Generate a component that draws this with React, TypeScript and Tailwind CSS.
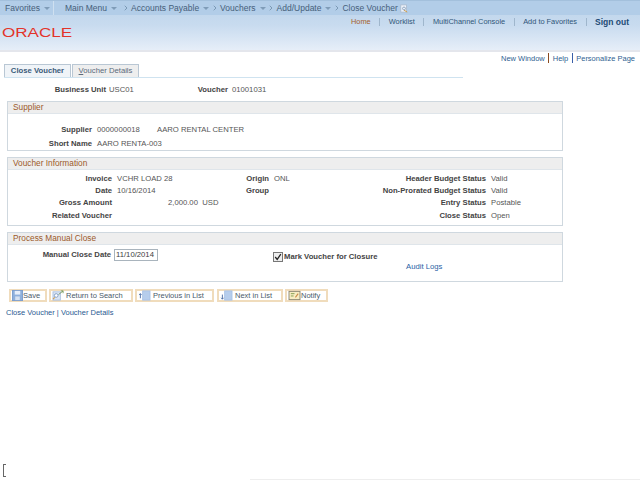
import React from 'react';
import { ChevronRight } from 'lucide-react';

const label = 'font-bold text-[#444444]';
const value = 'text-[#555555]';

function Crumb({ children, arrow = true }: { children: React.ReactNode; arrow?: boolean }) {
  return (
    <span className="flex items-center whitespace-nowrap">
      <span>{children}</span>
      {arrow && <span className="ml-[4px] mt-[1px] h-0 w-0 border-x-[3px] border-t-[3px] border-x-transparent border-t-[#7f9cb8]" />}
    </span>
  );
}

function Sep() {
  return <ChevronRight className="mx-[1.5px] h-[8px] w-[8px] text-[#5f7f9c]" strokeWidth={2} />;
}

function SectionHead({ title }: { title: string }) {
  return (
    <div className="h-[12px] border-b border-[#dfe5ea] bg-[#eeeeee] pl-[5px] text-[8.3px] leading-[10.5px] text-[#9c5a2a]">
      {title}
    </div>
  );
}

function Section({ title, height, children }: { title: string; height: string; children?: React.ReactNode }) {
  return (
    <section className={`w-[556px] border border-[#cfd8df] ${height}`}>
      <SectionHead title={title} />
      {children}
    </section>
  );
}

function Pair({ k, v, kw, vw, gap = 'ml-[5px]' }: { k: string; v?: string; kw: string; vw?: string; gap?: string }) {
  return (
    <>
      <span className={`${kw} shrink-0 whitespace-nowrap text-right ${label}`}>{k}</span>
      <span className={`${gap} ${vw ?? ''} shrink-0 whitespace-pre ${value}`}>{v}</span>
    </>
  );
}

function VoucherRow({ left, mid, right }: { left: React.ReactNode; mid: [string, string?]; right: [string, string] }) {
  return (
    <div className="flex h-[12.4px] items-center leading-[12px]">
      <div className="flex w-[230px] shrink-0">{left}</div>
      <Pair k={mid[0]} v={mid[1]} kw="w-[31px]" vw="w-[82px]" />
      <Pair k={right[0]} v={right[1]} kw="w-[130px]" />
    </div>
  );
}

function IconSave() {
  return (
    <svg viewBox="0 0 12 12" className="h-[11px] w-[11px] shrink-0">
      <rect x="0.5" y="0.5" width="11" height="11" fill="#8fb0dc" stroke="#7a9ccc" />
      <rect x="3" y="1" width="6" height="4" fill="#e6eefa" />
      <rect x="3.5" y="7" width="5" height="4" fill="#d5e1f2" />
    </svg>
  );
}

function IconSearch() {
  return (
    <svg viewBox="0 0 14 12" className="h-[11px] w-[13px] shrink-0">
      <rect x="1" y="2" width="8" height="9" fill="#dbe6f5" stroke="#a9bfdf" />
      <path d="M7 5 L12 1 M12 1 L9.5 1 M12 1 L12 3.5" stroke="#7a9a5c" strokeWidth="1" fill="none" />
      <circle cx="4.5" cy="6" r="2" fill="#fff" stroke="#7f9bc4" />
      <path d="M3 8 L1 10" stroke="#d4a050" strokeWidth="1.2" />
    </svg>
  );
}

function IconPrev() {
  return (
    <svg viewBox="0 0 14 12" className="h-[11px] w-[13px] shrink-0">
      <rect x="5" y="1" width="8" height="10" fill="#b6cdec" stroke="#a9c2e6" />
      <path d="M2.5 9 V4 M1.2 5.5 L2.5 4 L3.8 5.5" stroke="#4a6ba3" strokeWidth="1" fill="none" />
    </svg>
  );
}

function IconNext() {
  return (
    <svg viewBox="0 0 14 12" className="h-[11px] w-[13px] shrink-0">
      <rect x="5" y="1" width="8" height="10" fill="#b6cdec" stroke="#a9c2e6" />
      <path d="M2.5 5 V10 M1.2 8.5 L2.5 10 L3.8 8.5" stroke="#4a6ba3" strokeWidth="1" fill="none" />
    </svg>
  );
}

function IconNotify() {
  return (
    <svg viewBox="0 0 14 12" className="h-[11px] w-[13px] shrink-0">
      <rect x="1" y="1.5" width="12" height="9" fill="#f7edc4" stroke="#8a8570" />
      <path d="M3 4 H7 M3 6.5 H6" stroke="#7f9a4c" strokeWidth="1" />
      <path d="M8 8 L11 4" stroke="#c98a45" strokeWidth="1.2" />
    </svg>
  );
}

function ToolButton({ icon, text, width, gap }: { icon: React.ReactNode; text: string; width: string; gap: string }) {
  return (
    <button className={`flex h-[13px] items-center whitespace-nowrap border-2 border-[#f0dcbc] bg-white pl-px text-[7.5px] text-[#4a5a6a] ${width}`}>
      {icon}
      <span className={gap}>{text}</span>
    </button>
  );
}

export default function App() {
  return (
    <div className="flex h-[480px] w-[640px] flex-col overflow-hidden bg-white font-['Liberation_Sans',Arial,sans-serif] text-[7.7px]">
      {/* Header */}
      <header className="h-[52px] shrink-0 border-b-2 border-[#e4e6ec] bg-gradient-to-b from-[#bcd3ea] via-[#c8dbef] to-[#e6eef8]">
        <nav className="flex h-[15px] items-center border-t border-[#a3c0dc] bg-[#b2cde8] text-[8.5px] text-[#46607a]">
          <div className="flex h-full w-[54px] items-center border-r border-[#cfe0f0] pl-[5px]">
            <Crumb>Favorites</Crumb>
          </div>
          <div className="ml-[11px] flex items-center">
            <Crumb>Main Menu</Crumb>
            <span className="w-[3px]" />
            <Sep />
            <Crumb>Accounts Payable</Crumb>
            <Sep />
            <Crumb>Vouchers</Crumb>
            <Sep />
            <Crumb>Add/Update</Crumb>
            <Sep />
            <span className="whitespace-nowrap">Close Voucher</span>
            <svg viewBox="0 0 10 10" className="ml-[2px] h-[9px] w-[8px]">
              <rect x="1" y="0.5" width="7" height="9" fill="#eef3fa" stroke="#a9b9cc" />
              <path d="M5 7 L9 9.5" stroke="#d39a3c" strokeWidth="1.2" />
              <circle cx="5" cy="5" r="1.8" fill="none" stroke="#7f98b5" />
            </svg>
          </div>
        </nav>
        <div className="flex h-[21px]">
          <div className="w-[351px] shrink-0 pl-[2px]">
            <span className="mt-[12px] block origin-left scale-x-[1.42] text-[12px] leading-[13px] text-[#e3342a]">ORACLE</span>
          </div>
          <div className="flex h-[14px] items-center whitespace-nowrap text-[7.4px] text-[#2f5578]">
            <span className="text-[#a4612d]">Home</span>
            <span className="mx-[8.5px] h-[8px] w-px bg-[#9fb6cc]" />
            <span>Worklist</span>
            <span className="mx-[8.5px] h-[8px] w-px bg-[#9fb6cc]" />
            <span>MultiChannel Console</span>
            <span className="mx-[8.5px] h-[8px] w-px bg-[#9fb6cc]" />
            <span>Add to Favorites</span>
            <span className="mx-[8.5px] h-[8px] w-px bg-[#9fb6cc]" />
            <span className="text-[8.5px] font-bold text-[#1d4a75]">Sign out</span>
          </div>
        </div>
      </header>

      {/* Page links */}
      <div className="flex h-[11px] shrink-0 justify-end pr-[5px] pt-px text-[7.5px] leading-[11px] text-[#2f5f92]">
        <span>New Window</span>
        <span className="mx-[3.5px] w-px bg-[#8a4a20]" />
        <span>Help</span>
        <span className="mx-[3.5px] w-px bg-[#3a5fa8]" />
        <span>Personalize Page</span>
      </div>

      {/* Tabs */}
      <div className="ml-[4px] mt-px flex h-[14px] w-[459px] shrink-0 items-end border-b border-[#cfe3f0]">
        <div className="flex h-[13px] w-[67px] items-center justify-center border border-b-0 border-[#b9c7d4] bg-[#f0f4f8] font-bold text-[#3a5a78]">Close Voucher</div>
        <div className="ml-px flex h-[13px] w-[67px] items-center justify-center border border-b-0 border-[#b9c7d4] bg-[#eeeeee] text-[#5a6a7a]">
          <span><span className="underline">V</span>oucher Details</span>
        </div>
      </div>

      {/* Key fields */}
      <div className="mt-[5.5px] flex h-[12px] shrink-0 items-center leading-[12px]">
        <Pair k="Business Unit" v="USC01" kw="w-[106px]" vw="w-[60px]" gap="ml-[3px]" />
        <Pair k="Voucher" v="01001031" kw="w-[59px]" gap="ml-[4px]" />
      </div>

      <div className="ml-[7px] mt-[5.5px] flex shrink-0 flex-col gap-[6px]">
        <Section title="Supplier" height="h-[50px]">
          <div className="mt-[9px] flex h-[14px] items-center">
            <Pair k="Supplier" v="0000000018" kw="w-[84px]" vw="w-[60px]" />
            <span className={value}>AARO RENTAL CENTER</span>
          </div>
          <div className="flex h-[14px] items-center">
            <Pair k="Short Name" v="AARO RENTA-003" kw="w-[84px]" />
          </div>
        </Section>

        <Section title="Voucher Information" height="h-[69px]">
          <div className="mt-[2.5px] flex flex-col">
            <VoucherRow
              left={<Pair k="Invoice" v="VCHR LOAD 28" kw="w-[104px]" />}
              mid={['Origin', 'ONL']}
              right={['Header Budget Status', 'Valid']}
            />
            <VoucherRow
              left={<Pair k="Date" v="10/16/2014" kw="w-[104px]" />}
              mid={['Group']}
              right={['Non-Prorated Budget Status', 'Valid']}
            />
            <VoucherRow
              left={<Pair k="Gross Amount" v="2,000.00  USD" kw="w-[104px]" gap="ml-[56px]" />}
              mid={['']}
              right={['Entry Status', 'Postable']}
            />
            <VoucherRow
              left={<Pair k="Related Voucher" kw="w-[104px]" />}
              mid={['']}
              right={['Close Status', 'Open']}
            />
          </div>
        </Section>

        <Section title="Process Manual Close" height="h-[50px]">
          <div className="flex">
            <div className="mt-[4px] flex h-[12px] items-center">
              <span className={`w-[103px] whitespace-nowrap text-right ${label}`}>Manual Close Date</span>
              <span className="ml-[3px] flex h-[12px] w-[44px] items-center border border-[#a9b4bd] pl-px text-[#3d3d3d]">11/10/2014</span>
            </div>
            <div className="ml-[115px] mt-[7px] flex flex-col leading-[10px]">
              <div className="flex items-center whitespace-nowrap">
                <span className="flex h-[10px] w-[10px] items-center justify-center border border-[#777] bg-[#eee]">
                  <svg viewBox="0 0 10 10" className="h-[8px] w-[8px]"><path d="M1.5 5 L4 8 L8.5 1.5" stroke="#222" strokeWidth="1.6" fill="none" /></svg>
                </span>
                <span className={`ml-px ${label}`}>Mark Voucher for Closure</span>
              </div>
              <span className="ml-[133px] whitespace-nowrap text-[#2a5fa5]">Audit Logs</span>
            </div>
          </div>
        </Section>
      </div>

      {/* Toolbar */}
      <div className="ml-[9px] mt-[7px] flex shrink-0 gap-[2px]">
        <ToolButton icon={<IconSave />} text="Save" width="w-[38px]" gap="ml-0" />
        <ToolButton icon={<IconSearch />} text="Return to Search" width="w-[84px]" gap="ml-[1px]" />
        <ToolButton icon={<IconPrev />} text="Previous in List" width="w-[79px]" gap="ml-[2px]" />
        <ToolButton icon={<IconNext />} text="Next in List" width="ml-px w-[66px]" gap="ml-[2px]" />
        <ToolButton icon={<IconNotify />} text="Notify" width="w-[43px]" gap="ml-0" />
      </div>

      <div className="ml-[6px] mt-[5px] shrink-0 text-[7.5px] leading-[11px] text-[#2a5a92]">Close Voucher | Voucher Details</div>

      {/* Bottom remnants */}
      <div className="mt-auto flex shrink-0 flex-col">
        <div className="mb-[2px] ml-[3px] h-[13px] w-[3px] border-y border-l border-[#666]" />
        <div className="ml-[250px] h-px w-[390px] bg-[#eeeeee]" />
      </div>
    </div>
  );
}
